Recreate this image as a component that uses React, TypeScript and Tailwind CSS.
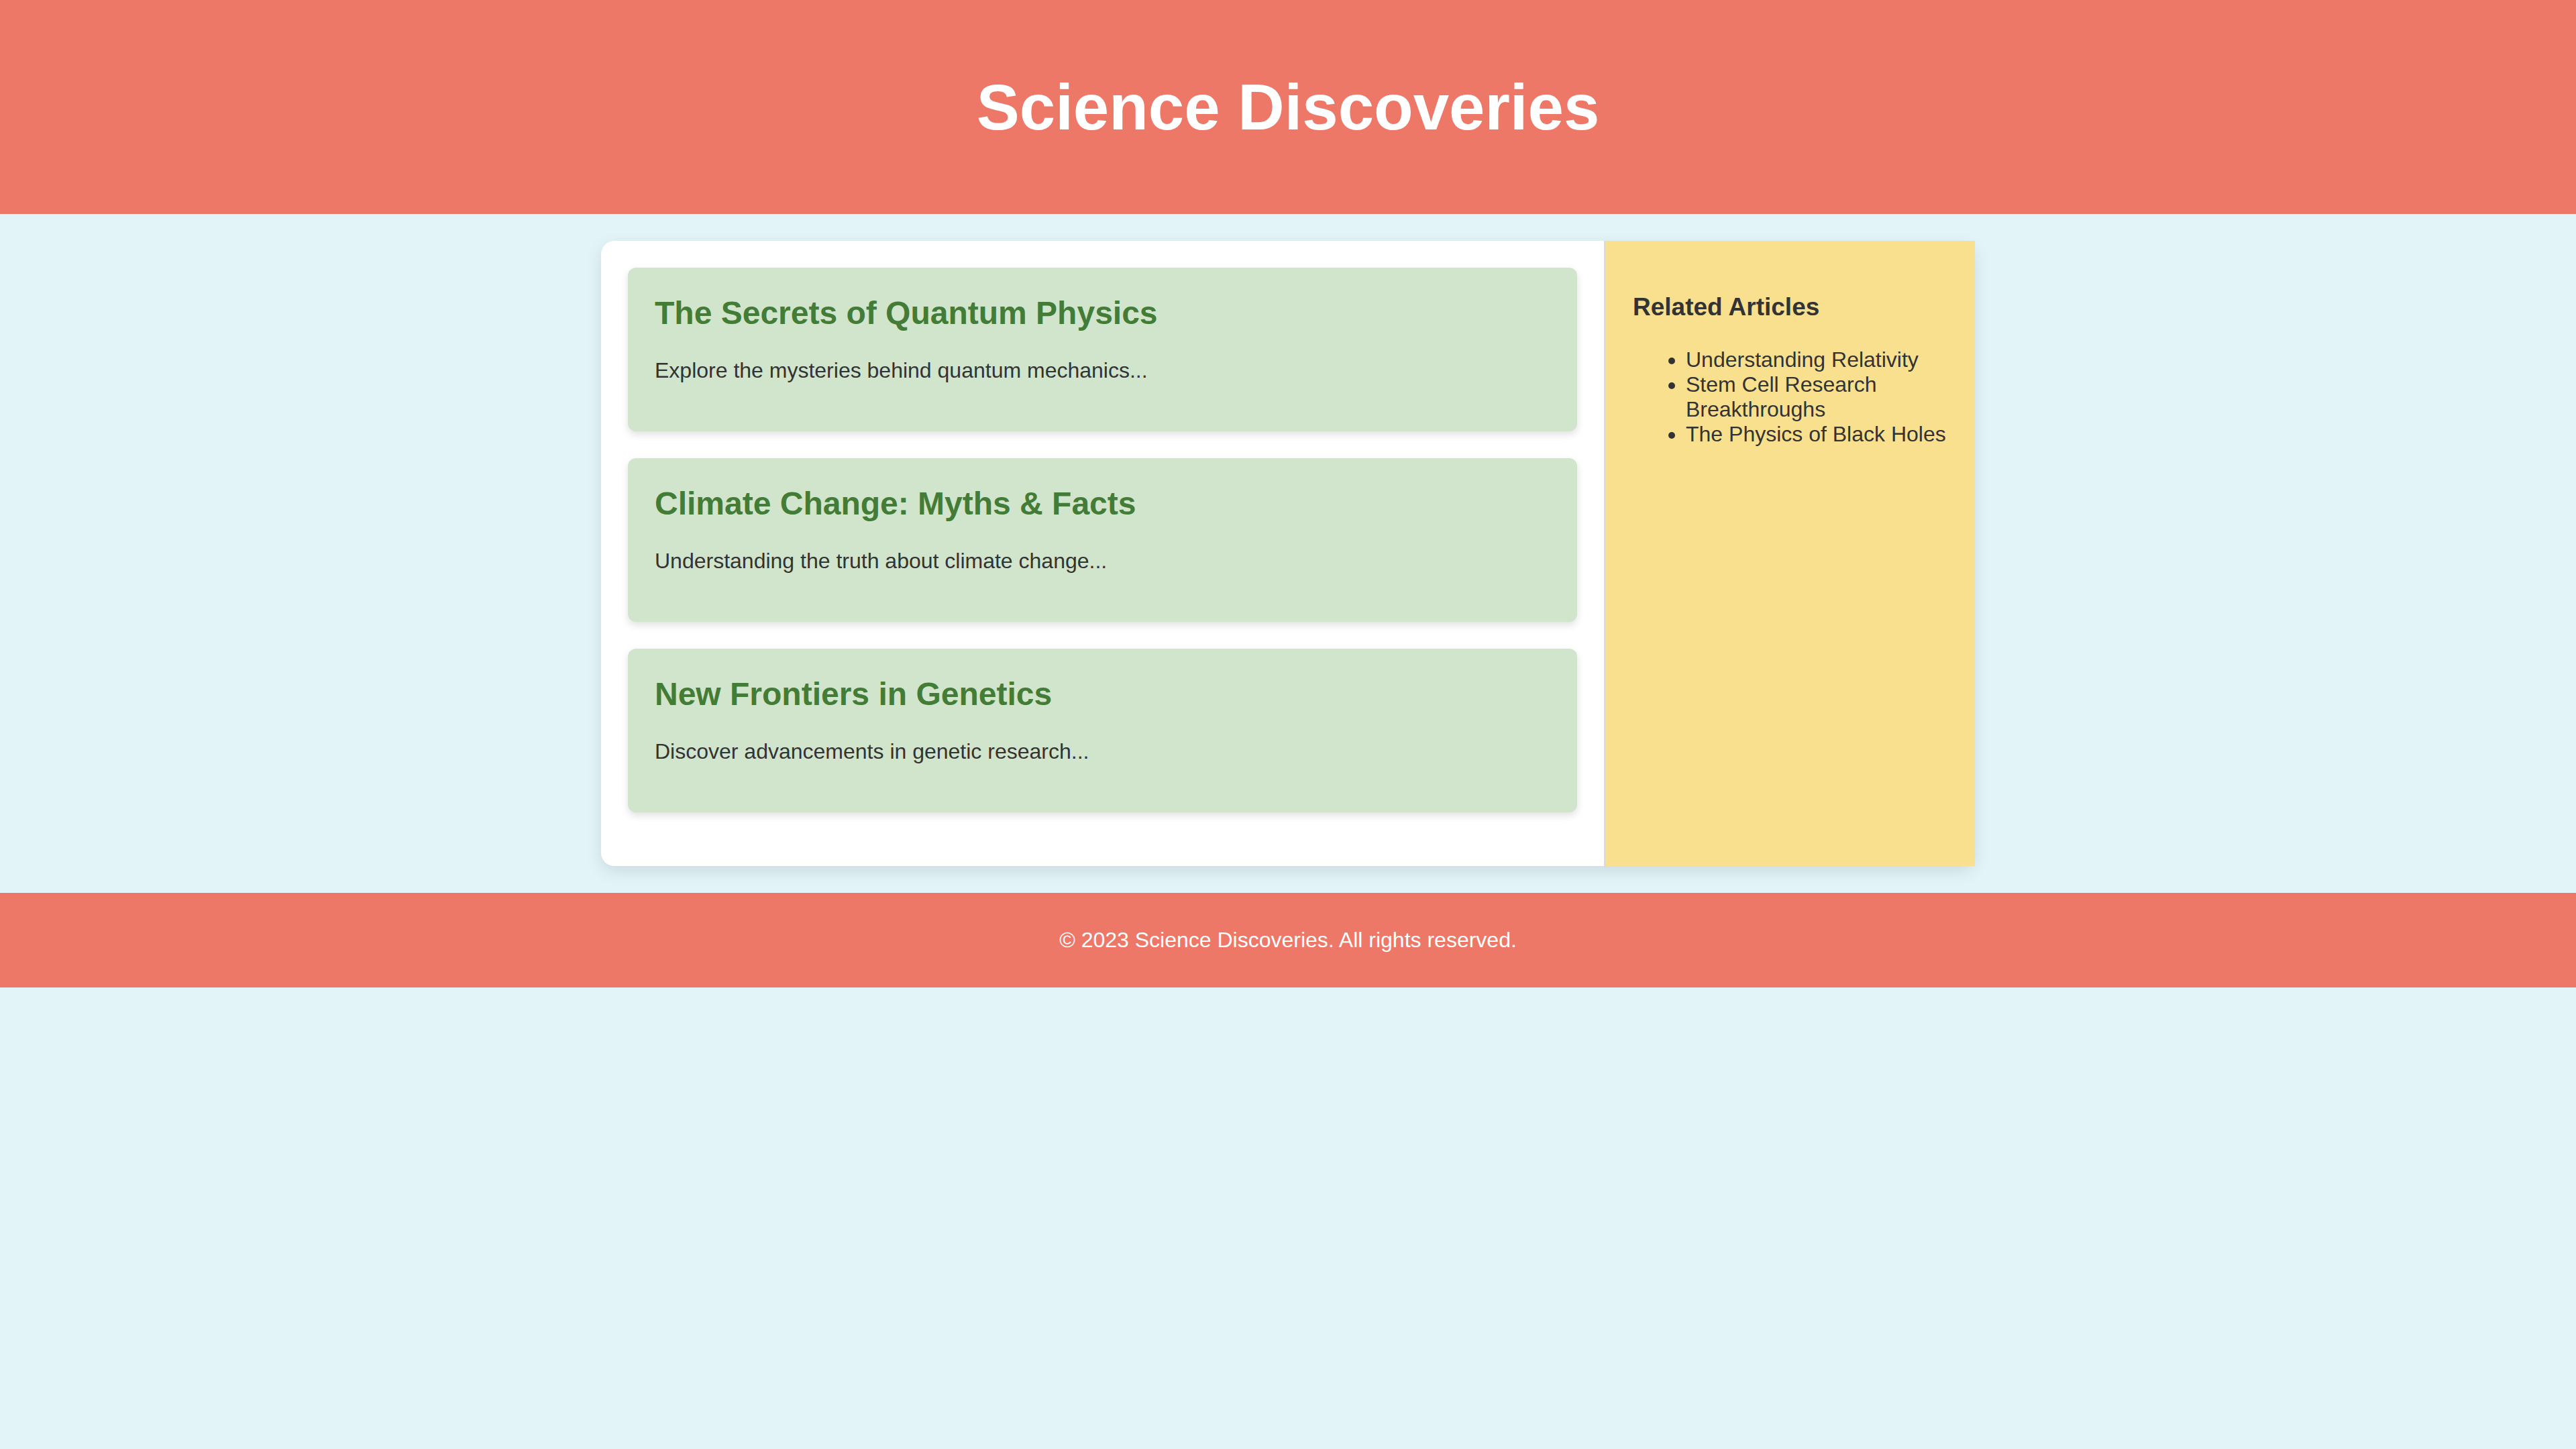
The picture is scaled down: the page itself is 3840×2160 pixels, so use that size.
const articles = [
  {
    title: "The Secrets of Quantum Physics",
    summary: "Explore the mysteries behind quantum mechanics...",
  },
  {
    title: "Climate Change: Myths & Facts",
    summary: "Understanding the truth about climate change...",
  },
  {
    title: "New Frontiers in Genetics",
    summary: "Discover advancements in genetic research...",
  },
];

const related = [
  "Understanding Relativity",
  "Stem Cell Research Breakthroughs",
  "The Physics of Black Holes",
];

export default function App() {
  return (
    <div className="min-h-screen bg-[#e2f4f8] font-['Liberation_Sans',Arial,sans-serif] text-[#333]">
      <header className="flex h-[319px] items-center justify-center bg-[#ee7868]">
        <h1 className="text-[96px] font-bold leading-[110px] text-white">Science Discoveries</h1>
      </header>

      <div className="mx-auto mt-[40px] flex w-[2048px] rounded-[20px] bg-white shadow-[0_8px_24px_rgba(0,0,0,0.1)]">
        <main className="flex-1 p-[40px]">
          {articles.map((a) => (
            <article
              key={a.title}
              className="mb-[40px] rounded-[12px] bg-[#d0e5cb] p-[40px] shadow-[0_5px_12px_rgba(0,0,0,0.12)]"
            >
              <h2 className="text-[48px] font-bold leading-[55px] text-[#437c36]">{a.title}</h2>
              <p className="mt-[40px] mb-[32px] text-[32px] leading-[37px]">{a.summary}</p>
            </article>
          ))}
        </main>

        <aside className="w-[553px] border-l-2 border-[#d9d9d9] bg-[#f9e08e] pl-[41px] pr-[38px] pt-[40px]">
          <h3 className="mt-[38px] text-[37px] font-bold leading-[42px]">Related Articles</h3>
          <ul className="mt-[39px] list-disc pl-[79px] text-[32px] leading-[37px]">
            {related.map((r) => (
              <li key={r}>{r}</li>
            ))}
          </ul>
        </aside>
      </div>

      <footer className="mt-[40px] flex h-[141px] items-center justify-center bg-[#ee7868]">
        <p className="text-[32px] leading-[37px] text-white">© 2023 Science Discoveries. All rights reserved.</p>
      </footer>
    </div>
  );
}
